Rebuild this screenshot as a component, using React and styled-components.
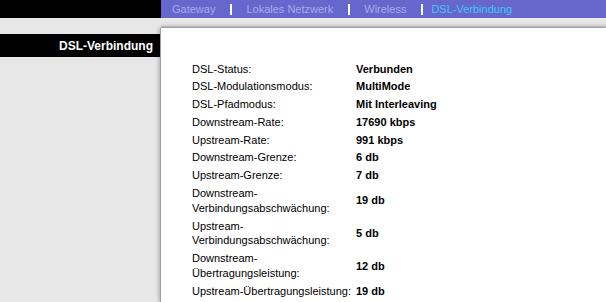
import { Fragment } from "react";
import styled, { createGlobalStyle } from "styled-components";

const GlobalStyle = createGlobalStyle`
  html, body {
    margin: 0;
    padding: 0;
    background: #e7e7e7;
    font-family: "Liberation Sans", Arial, sans-serif;
  }
`;

const tabs = [
  { label: "Gateway" },
  { label: "Lokales Netzwerk" },
  { label: "Wireless" },
  { label: "DSL-Verbindung", active: true },
];

const rows = [
  { label: ["DSL-Status:"], value: "Verbunden" },
  { label: ["DSL-Modulationsmodus:"], value: "MultiMode" },
  { label: ["DSL-Pfadmodus:"], value: "Mit Interleaving" },
  { label: ["Downstream-Rate:"], value: "17690 kbps" },
  { label: ["Upstream-Rate:"], value: "991 kbps" },
  { label: ["Downstream-Grenze:"], value: "6 db" },
  { label: ["Upstream-Grenze:"], value: "7 db" },
  { label: ["Downstream-", "Verbindungsabschwächung:"], value: "19 db" },
  { label: ["Upstream-", "Verbindungsabschwächung:"], value: "5 db" },
  { label: ["Downstream-", "Übertragungsleistung:"], value: "12 db" },
  { label: ["Upstream-Übertragungsleistung:"], value: "19 db" },
];

const Page = styled.div`
  width: 606px;
  min-height: 302px;
  display: flex;
  flex-direction: column;
`;

const TopBar = styled.div`
  display: flex;
  height: 18px;
`;

const TopLeft = styled.div`
  width: 161px;
  background: #000;
`;

const TabBar = styled.nav`
  flex: 1;
  background: #6666cc;
  display: flex;
  align-items: center;
  padding-left: 11px;
`;

const Tab = styled.span`
  font-size: 11px;
  color: ${(p) => (p.$active ? "#3fc8f6" : "#aaaaec")};
  padding: 0 15px 0 0;
  white-space: nowrap;
`;

const Separator = styled.span`
  width: 2px;
  height: 11px;
  background: #fff;
  margin-right: ${(p) => (p.$tight ? "8px" : "14px")};
`;

const Body = styled.div`
  flex: 1;
  display: flex;
`;

const Sidebar = styled.aside`
  width: 161px;
  background: #e7e7e7;
  padding-top: 16px;
`;

const SideHeading = styled.h2`
  margin: 0;
  height: 23px;
  background: #000;
  color: #fff;
  font-size: 12px;
  font-weight: bold;
  display: flex;
  align-items: center;
  justify-content: flex-end;
  padding-right: 8px;
`;

const Main = styled.main`
  flex: 1;
  display: flex;
  flex-direction: column;
`;

const Band = styled.div`
  height: 10px;
  background: linear-gradient(#ececec, #e2e2e2 60%, #c4c4c4 85%, #9c9c9c);
`;

const Panel = styled.section`
  flex: 1;
  background: #fff;
  box-shadow: -1px 0 0 #a0a0a0, -3px 0 3px rgba(0, 0, 0, 0.18);
  padding: 32px 0 0 31px;
`;

const Table = styled.table`
  border-collapse: collapse;
  font-size: 11px;
  line-height: 14.8px;
  color: #000;
`;

const Label = styled.td`
  width: 164px;
  padding: 1.5px 0;
  white-space: nowrap;
  vertical-align: middle;
`;

const Value = styled.td`
  padding: 1.5px 0;
  font-weight: bold;
  white-space: nowrap;
  vertical-align: middle;
`;

export default function App() {
  return (
    <>
      <GlobalStyle />
      <Page>
        <TopBar>
          <TopLeft />
          <TabBar>
            {tabs.map((t, i) => (
              <Fragment key={t.label}>
                {i > 0 && <Separator $tight={t.active} />}
                <Tab $active={t.active}>{t.label}</Tab>
              </Fragment>
            ))}
          </TabBar>
        </TopBar>
        <Body>
          <Sidebar>
            <SideHeading>DSL-Verbindung</SideHeading>
          </Sidebar>
          <Main>
            <Band />
            <Panel>
              <Table>
                <tbody>
                  {rows.map((r) => (
                    <tr key={r.label.join("")}>
                      <Label>
                        {r.label.map((l, i) => (
                          <div key={i}>{l}</div>
                        ))}
                      </Label>
                      <Value>{r.value}</Value>
                    </tr>
                  ))}
                </tbody>
              </Table>
            </Panel>
          </Main>
        </Body>
      </Page>
    </>
  );
}
